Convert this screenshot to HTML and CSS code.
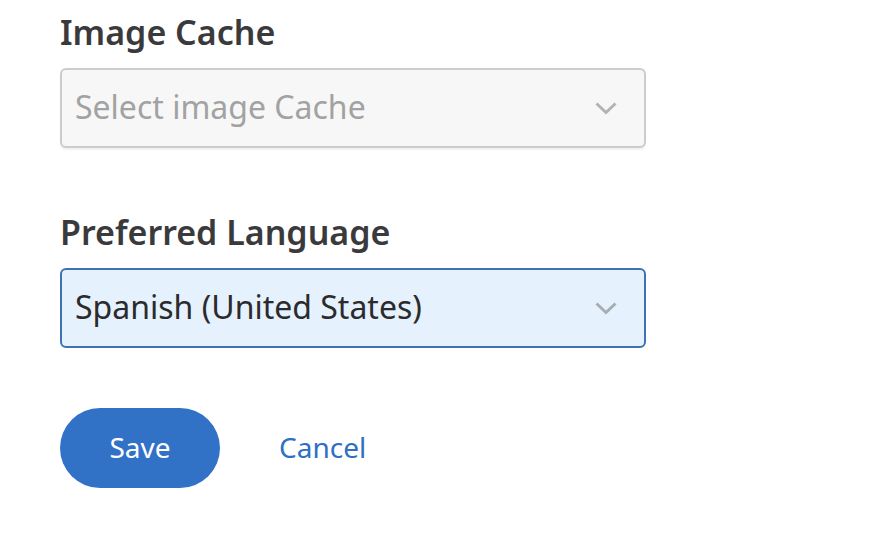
FILE: index.html
```html
<!DOCTYPE html>
<html lang="en">
<head>
<meta charset="utf-8">
<title>Settings</title>
<link rel="stylesheet" href="styles.css">
</head>
<body>
<form class="settings-form">
  <div class="field">
    <label class="field-label">Image Cache</label>
    <div class="select select-empty">
      <span class="select-value placeholder">Select image Cache</span>
      <svg class="chevron" width="22" height="13" viewBox="0 0 22 13"><polyline points="1.5,1.5 11,10.5 20.5,1.5" fill="none" stroke="#b3b3b3" stroke-width="3"/></svg>
    </div>
  </div>
  <div class="field">
    <label class="field-label">Preferred Language</label>
    <div class="select select-active">
      <span class="select-value">Spanish (United States)</span>
      <svg class="chevron" width="22" height="13" viewBox="0 0 22 13"><polyline points="1.5,1.5 11,10.5 20.5,1.5" fill="none" stroke="#a8adb3" stroke-width="3"/></svg>
    </div>
  </div>
  <div class="actions">
    <button type="button" class="btn-primary">Save</button>
    <button type="button" class="btn-link">Cancel</button>
  </div>
</form>
</body>
</html>
```

FILE: styles.css
```css
html, body {
  margin: 0;
  padding: 0;
  background: #ffffff;
}

body {
  font-family: "Noto Sans", "Open Sans", sans-serif;
}

.settings-form {
  display: flex;
  flex-direction: column;
  gap: 60px;
  width: 586px;
  padding: 8px 0 0 60px;
}

.field {
  display: flex;
  flex-direction: column;
  gap: 12px;
}

.field-label {
  font-size: 34px;
  font-weight: 600;
  line-height: 48px;
  color: #3a3a3c;
}

.select {
  box-sizing: border-box;
  height: 80px;
  display: flex;
  align-items: center;
  justify-content: space-between;
  padding: 0 27px 0 13px;
  border-radius: 6px;
  border: 2px solid #cccccc;
}

.select-empty {
  background: #f7f7f7;
  box-shadow: 0 2px 2px rgba(0, 0, 0, 0.06);
}

.select-active {
  background: #e5f1fc;
  border-color: #3f72b0;
}

.select-value {
  font-size: 32px;
  line-height: 44px;
  padding-bottom: 2px;
  color: #2b2b2d;
}

.placeholder {
  color: #a2a2a2;
}

.chevron {
  display: block;
}

.actions {
  display: flex;
  align-items: center;
  gap: 59px;
}

.btn-primary {
  width: 160px;
  height: 80px;
  border: none;
  border-radius: 40px;
  background: #3172c7;
  color: #ffffff;
  font-family: inherit;
  font-size: 28px;
  padding: 0 0 2px;
}

.btn-link {
  border: none;
  background: none;
  padding: 0 0 2px;
  color: #2f6fc4;
  font-family: inherit;
  font-size: 28px;
}
```
